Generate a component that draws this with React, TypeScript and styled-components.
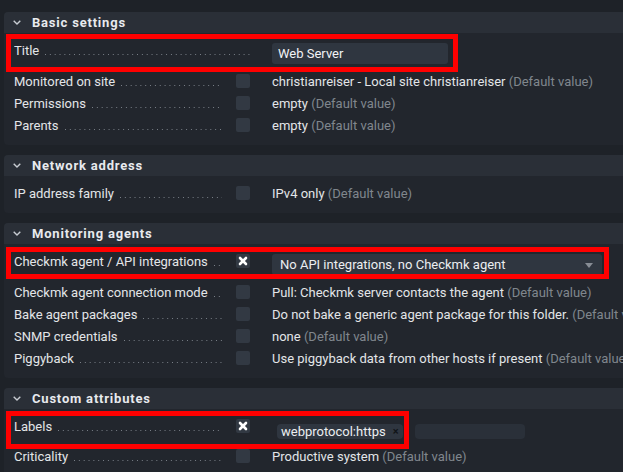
import styled, { createGlobalStyle } from "styled-components"

const GlobalStyle = createGlobalStyle`
  html, body {
    margin: 0;
    padding: 0;
    background: #1e2228;
    overflow: hidden;
  }
  body {
    font-family: Roboto, "Liberation Sans", sans-serif;
    font-size: 13px;
    color: #e3e5e8;
  }
`

interface AttrProps {
  label: string
  value: string
  isDefault?: boolean
}

function Chevron() {
  return (
    <svg width="8" height="5" viewBox="0 0 8 5">
      <polyline points="0.7,0.8 4,4 7.3,0.8" fill="none" stroke="#c8ccd2" strokeWidth="1.4" />
    </svg>
  )
}

function CheckedBox() {
  return (
    <Check>
      <svg width="14" height="14" viewBox="0 0 14 14">
        <line x1="4" y1="4" x2="10" y2="10" stroke="#ffffff" strokeWidth="2.6" strokeLinecap="round" />
        <line x1="10" y1="4" x2="4" y2="10" stroke="#ffffff" strokeWidth="2.6" strokeLinecap="round" />
      </svg>
    </Check>
  )
}

function AttrRow({ label, value, isDefault = true }: AttrProps) {
  return (
    <Row>
      <LabelCell>
        <LabelText>{label}</LabelText>
        <Dots />
      </LabelCell>
      <Check />
      <Value>
        {value}
        {isDefault && <DefaultNote> (Default value)</DefaultNote>}
      </Value>
    </Row>
  )
}

function SectionHead({ title }: { title: string }) {
  return (
    <Header>
      <Chevron />
      <HeaderTitle>{title}</HeaderTitle>
    </Header>
  )
}

export default function App() {
  return (
    <>
      <GlobalStyle />
      <Page>
        <Section>
          <SectionHead title="Basic settings" />
          <Body>
            <TallRow $boxTop={1} $boxHeight={38} $boxWidth={452}>
              <LabelCell $wide>
                <LabelText>Title</LabelText>
                <Dots />
              </LabelCell>
              <TextInput>Web Server</TextInput>
            </TallRow>
            <AttrRow label="Monitored on site" value="christianreiser - Local site christianreiser" />
            <AttrRow label="Permissions" value="empty" />
            <AttrRow label="Parents" value="empty" />
          </Body>
        </Section>

        <Section>
          <SectionHead title="Network address" />
          <Body $top={6}>
            <AttrRow label="IP address family" value="IPv4 only" />
          </Body>
        </Section>

        <Section>
          <SectionHead title="Monitoring agents" />
          <Body>
            <TallRow $boxTop={3} $boxHeight={32} $boxWidth={603}>
              <LabelCell>
                <LabelText>Checkmk agent / API integrations</LabelText>
                <Dots />
              </LabelCell>
              <CheckedBox />
              <Select>
                No API integrations, no Checkmk agent
                <Arrow />
              </Select>
            </TallRow>
            <AttrRow label="Checkmk agent connection mode" value="Pull: Checkmk server contacts the agent" />
            <AttrRow label="Bake agent packages" value="Do not bake a generic agent package for this folder." />
            <AttrRow label="SNMP credentials" value="none" />
            <AttrRow label="Piggyback" value="Use piggyback data from other hosts if present" />
          </Body>
        </Section>

        <Section>
          <SectionHead title="Custom attributes" />
          <Body>
            <TallRow $boxTop={2} $boxHeight={38} $boxWidth={403} $height={36}>
              <LabelCell>
                <LabelText>Labels</LabelText>
                <Dots />
              </LabelCell>
              <CheckedBox />
              <TagField>
                <Tag>
                  webprotocol:https
                  <TagClose>×</TagClose>
                </Tag>
                <TagInput />
              </TagField>
            </TallRow>
            <AttrRow label="Criticality" value="Productive system" />
          </Body>
        </Section>
      </Page>
    </>
  )
}

const Page = styled.div`
  display: flex;
  flex-direction: column;
  gap: 10px;
  width: 760px;
  padding: 12px 0 0 4px;
`

const Section = styled.div`
  background-color: #22262d;
  border-radius: 4px 0 0 4px;
`

const Header = styled.div`
  display: flex;
  align-items: center;
  gap: 11px;
  height: 21px;
  padding-left: 9px;
  background-color: #2a2f37;
  border-radius: 4px 0 0 0;
`

const HeaderTitle = styled.span`
  font-weight: 700;
  font-size: 13px;
  letter-spacing: 0.8px;
  color: #e8eaee;
`

const Body = styled.div<{ $top?: number }>`
  padding: ${(p) => p.$top ?? 0}px 0 9px 0;
`

const Row = styled.div`
  display: flex;
  align-items: center;
  height: 22px;
  padding-left: 10px;
`

const TallRow = styled.div<{
  $boxTop: number
  $boxHeight: number
  $boxWidth: number
  $height?: number
}>`
  position: relative;
  display: flex;
  align-items: flex-start;
  height: ${(p) => p.$height ?? 37}px;
  padding: 10px 0 0 10px;
  box-sizing: border-box;

  &::after {
    content: "";
    position: absolute;
    left: 2px;
    top: ${(p) => p.$boxTop}px;
    width: ${(p) => p.$boxWidth}px;
    height: ${(p) => p.$boxHeight}px;
    border: 5px solid #ff0000;
    box-sizing: border-box;
    pointer-events: none;
  }
`

const LabelCell = styled.div<{ $wide?: boolean }>`
  display: flex;
  align-items: center;
  width: ${(p) => (p.$wide ? 236 : 208)}px;
  margin-right: ${(p) => (p.$wide ? 22 : 14)}px;
  line-height: 15px;
  flex-shrink: 0;
  overflow: hidden;
`

const LabelText = styled.span`
  white-space: nowrap;
  color: #e3e5e8;
`

const Dots = styled.span`
  flex: 1;
  min-width: 8px;
  height: 15px;
  margin-left: 6px;
  background-image: linear-gradient(to right, #7a8088 1px, transparent 1px);
  background-size: 4.85px 1px;
  background-repeat: repeat-x;
  background-position: left 11px;
`

const Check = styled.div`
  display: flex;
  width: 14px;
  height: 14px;
  margin-right: 22px;
  border-radius: 2px;
  background-color: #323943;
  flex-shrink: 0;
`

const Value = styled.span`
  white-space: nowrap;
  line-height: 15px;
  color: #e3e5e8;
`

const DefaultNote = styled.span`
  color: #80868d;
`

const TextInput = styled.div`
  width: 176px;
  height: 21px;
  box-sizing: border-box;
  padding-left: 6px;
  line-height: 21px;
  border-radius: 3px;
  background-color: #2f3640;
  color: #f2f3f5;
`

const Select = styled.div`
  position: relative;
  width: 330px;
  height: 21px;
  box-sizing: border-box;
  padding-left: 8px;
  line-height: 21px;
  border-radius: 3px;
  background-color: #2f3640;
  color: #eceef1;
`

const Arrow = styled.span`
  position: absolute;
  right: 9px;
  top: 9px;
  width: 0;
  height: 0;
  border-left: 4px solid transparent;
  border-right: 4px solid transparent;
  border-top: 5px solid #878d95;
`

const TagField = styled.div`
  display: flex;
  align-items: center;
  gap: 12px;
  margin-top: 5px;
  padding-left: 5px;
`

const Tag = styled.span`
  display: flex;
  align-items: center;
  height: 15px;
  padding: 0 4px 0 4px;
  border-radius: 4px;
  background-color: #2f3640;
  line-height: 15px;
  color: #eceef1;
  white-space: nowrap;
`

const TagClose = styled.span`
  margin-left: 7px;
  font-size: 11px;
  font-weight: 700;
  color: #111418;
`

const TagInput = styled.span`
  width: 110px;
  height: 15px;
  border-radius: 4px;
  background-color: #2a3039;
`
